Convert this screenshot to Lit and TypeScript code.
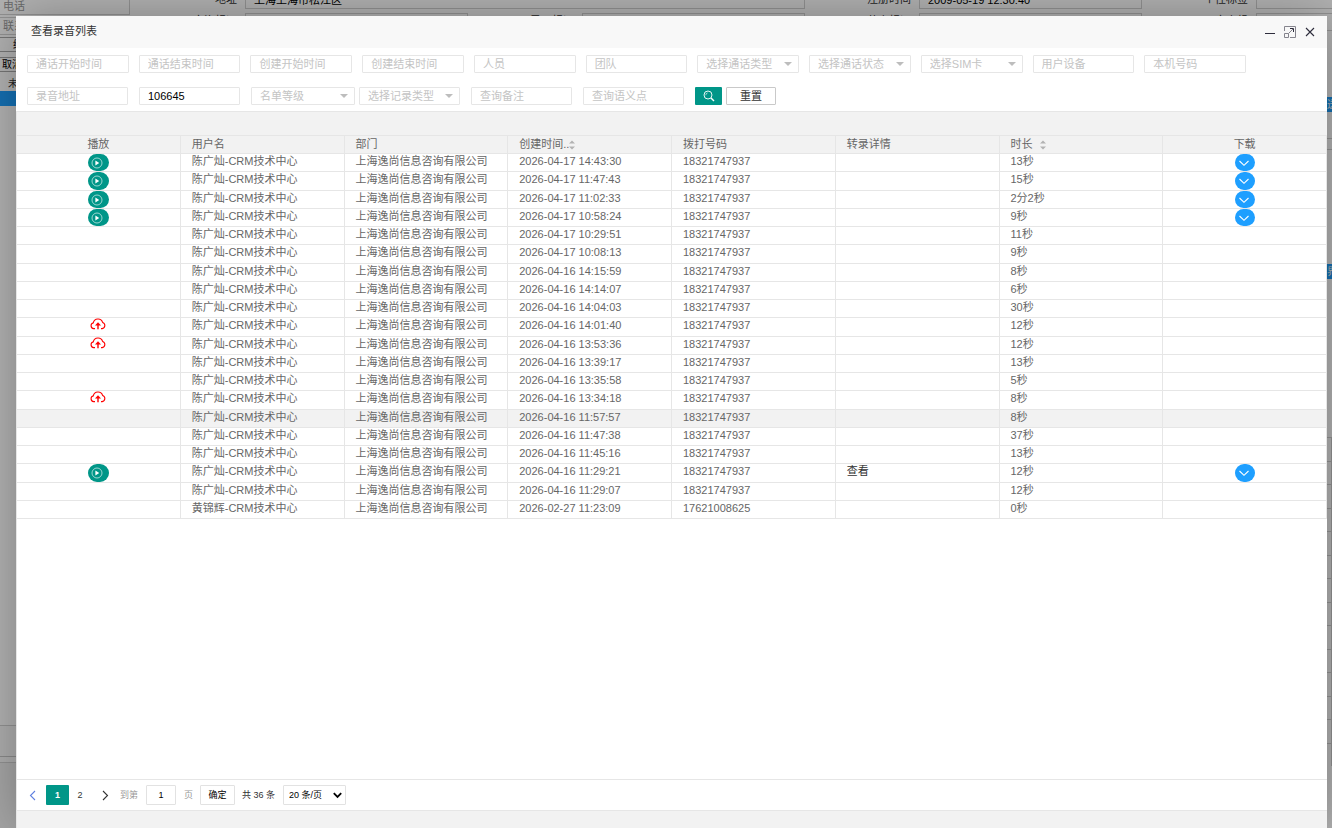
import { LitElement, html, css, svg, nothing } from "lit";
import { customElement } from "lit/decorators.js";

type Media = "play" | "upload" | "";
interface Row {
  user: string;
  time: string;
  phone: string;
  length: string;
  media: Media;
  detail: string;
}

const row = (time: string, length: string, media: Media = "", detail = ""): Row => ({
  user: "陈广灿-CRM技术中心",
  time,
  phone: "18321747937",
  length,
  media,
  detail,
});

const ROWS: Row[] = [
  row("2026-04-17 14:43:30", "13秒", "play"),
  row("2026-04-17 11:47:43", "15秒", "play"),
  row("2026-04-17 11:02:33", "2分2秒", "play"),
  row("2026-04-17 10:58:24", "9秒", "play"),
  row("2026-04-17 10:29:51", "11秒"),
  row("2026-04-17 10:08:13", "9秒"),
  row("2026-04-16 14:15:59", "8秒"),
  row("2026-04-16 14:14:07", "6秒"),
  row("2026-04-16 14:04:03", "30秒"),
  row("2026-04-16 14:01:40", "12秒", "upload"),
  row("2026-04-16 13:53:36", "12秒", "upload"),
  row("2026-04-16 13:39:17", "13秒"),
  row("2026-04-16 13:35:58", "5秒"),
  row("2026-04-16 13:34:18", "8秒", "upload"),
  row("2026-04-16 11:57:57", "8秒"),
  row("2026-04-16 11:47:38", "37秒"),
  row("2026-04-16 11:45:16", "13秒"),
  row("2026-04-16 11:29:21", "12秒", "play", "查看"),
  row("2026-04-16 11:29:07", "12秒"),
  { ...row("2026-02-27 11:23:09", "0秒"), user: "黄锦辉-CRM技术中心", phone: "17621008625" },
];
const HOVERED = 14;

const playIcon = html`<svg width="12" height="12" viewBox="0 0 12 12" aria-hidden="true">
  <circle cx="6" cy="6" r="5" fill="none" stroke="#fff" stroke-width="0.6" />
  <path d="M4.4 3.5 8.2 6 4.4 8.5z" fill="#fff" />
</svg>`;
const downIcon = html`<svg width="12" height="12" viewBox="0 0 12 12" aria-hidden="true">
  <path d="M1.5 4 6 8.3 10.5 4" fill="none" stroke="#fff" stroke-width="1.1" />
</svg>`;
const cloudIcon = html`<svg width="16" height="12" viewBox="0 0 16 12" aria-hidden="true">
  <path d="M5 10.6H3.6A2.9 2.9 0 0 1 3.3 4.9 4.8 4.8 0 0 1 12.6 4.4 3.2 3.2 0 0 1 12.2 10.6H11" fill="none" stroke="#f00" stroke-width="1.1" />
  <path d="M8 11.2V6" fill="none" stroke="#f00" stroke-width="1.4" />
  <path d="M5 7.4 8 4.2l3 3.2z" fill="#f00" />
</svg>`;
const sortIcon = html`<svg class="sort" width="6" height="10" viewBox="0 0 6 10" aria-hidden="true">
  <path d="M0 3.6 3 .6l3 3zM0 6.4l3 3 3-3z" fill="#b2b2b2" />
</svg>`;
const chevron = (d: string, color: string) => html`<svg width="7" height="11" viewBox="0 0 7 11" aria-hidden="true">
  ${svg`<path d=${d} fill="none" stroke=${color} stroke-width="1.1" />`}
</svg>`;

@customElement("page-backdrop")
export class PageBackdrop extends LitElement {
  static styles = css`
    :host {
      display: grid;
      grid-template-columns: 130px 1fr;
      height: 100%;
      overflow: hidden;
      background: #fff;
      color: #333;
      font: 11px/16px "Liberation Sans", "Noto Sans CJK SC", sans-serif;
    }
    .rail {
      display: flex;
      flex-direction: column;
      gap: 2px;
      margin-top: -3px;
    }
    .box {
      box-sizing: border-box;
      height: 18px;
      border: 1px solid #d2d2d2;
      border-left: 0;
      padding-left: 3px;
      color: #999;
      white-space: nowrap;
    }
    .key {
      height: 15px;
      box-sizing: border-box;
      margin-bottom: 3px;
      border: 1px solid #aaa;
      border-left: 0;
      padding-left: 2px;
      line-height: 13px;
      font-size: 10px;
      color: #000;
    }
    .short {
      padding-left: 13px;
    }
    .tab {
      height: 15px;
      padding-left: 8px;
      line-height: 13px;
      font-size: 10px;
    }
    .on {
      margin-top: -3px;
      background: #1e9fff;
    }
    .foot {
      margin-top: auto;
      height: 102px;
      border-top: 1px solid #d2d2d2;
      background: #eee;
    }
    .head {
      height: 30px;
      border-bottom: 1px solid #c6c6c6;
      background: #fafafa;
    }
    .sub {
      height: 5px;
      border-bottom: 1px solid #d2d2d2;
      background: #fafafa;
    }
    .main {
      min-width: 0;
      display: flex;
      flex-direction: column;
    }
    .form {
      display: grid;
      grid-template-columns: repeat(4, 114px 223px);
      row-gap: 4px;
      margin: -9px 0 0 1px;
    }
    .label {
      padding-right: 8px;
      text-align: right;
    }
    .value {
      box-sizing: border-box;
      height: 18px;
      border: 1px solid #d2d2d2;
      padding-left: 8px;
      color: #000;
    }
    .wide {
      grid-column: span 3;
    }
    .edge {
      align-self: flex-end;
      width: 5px;
      flex: 1;
      overflow: hidden;
    }
    .tag {
      height: 15px;
      background: #1e9fff;
      color: #fff;
      font-size: 10px;
      line-height: 15px;
    }
    .first {
      margin: 66px 0 26px;
    }
    .second {
      margin: 1px 0 158px;
    }
    .strip {
      height: 10px;
      border: solid #d2d2d2;
      border-width: 1px 0;
    }
    .gap {
      height: 113px;
    }
    .line {
      box-sizing: border-box;
      height: 24px;
      border: solid #d2d2d2;
      border-width: 1px 1px 0 0;
    }
    .line:nth-child(even) {
      height: 23px;
    }
  `;

  render() {
    return html`
      <div class="rail">
        <div class="box">电话</div>
        <div class="box">联系人</div>
        <div class="key short">编辑</div>
        <div class="key">取消</div>
        <div class="tab">未接</div>
        <div class="tab on"></div>
        <div class="foot">
          <div class="head"></div>
          <div class="sub"></div>
        </div>
      </div>
      <div class="main">
        <div class="form">
          <div class="label">地址</div>
          <div class="value wide">上海上海市松江区</div>
          <div class="label">注册时间</div>
          <div class="value">2009-05-19 12:30:40</div>
          <div class="label">个性标签</div>
          <div class="value"></div>
          <div class="label">客资标识</div>
          <div class="value"></div>
          <div class="label">导入标识</div>
          <div class="value"></div>
          <div class="label">蓝字标识</div>
          <div class="value"></div>
          <div class="label">客户组</div>
          <div class="value"></div>
        </div>
        <div class="edge">
          <div class="tag first">送</div>
          <div class="strip"></div>
          <div class="gap"></div>
          <div class="tag second">界</div>
          ${Array.from({ length: 14 }, () => html`<div class="line"></div>`)}
        </div>
      </div>
    `;
  }
}

@customElement("recording-table")
export class RecordingTable extends LitElement {
  static styles = css`
    :host {
      display: block;
    }
    table {
      width: 100%;
      table-layout: fixed;
      border-collapse: separate;
      border-spacing: 0;
      border-top: 1px solid #e6e6e6;
      color: #666;
      font: 11px/15px "Liberation Sans", "Noto Sans CJK SC", sans-serif;
    }
    th,
    td {
      box-sizing: border-box;
      height: 18px;
      padding: 0 11px;
      border: solid #e6e6e6;
      border-width: 0 1px 1px 0;
      font-weight: 400;
      text-align: left;
      vertical-align: top;
      white-space: nowrap;
      overflow: hidden;
    }
    thead th {
      background: #f2f2f2;
      line-height: 17px;
    }
    .center {
      text-align: center;
    }
    tbody tr:nth-child(4n + 2) td {
      height: 19px;
    }
    .hover td {
      background: #f2f2f2;
    }
    button,
    .link {
      font: inherit;
      border: 0;
      padding: 0;
      background: none;
      cursor: pointer;
    }
    .pill {
      display: flex;
      align-items: center;
      justify-content: center;
      width: 21px;
      height: 17px;
      margin: 0 auto;
      padding-right: 2px;
      border-radius: 9px;
      background: #009688;
    }
    .down {
      width: 20px;
      background: #1e9fff;
    }
    tbody tr:nth-child(4n + 2) .pill {
      height: 18px;
    }
    .cloud {
      display: block;
      width: 16px;
      height: 12px;
      margin: 0 auto;
      line-height: 0;
    }
    .link {
      color: #333;
      text-decoration: none;
    }
    .sortable {
      display: flex;
      align-items: center;
      color: inherit;
      height: 17px;
    }
    .spaced {
      gap: 7px;
    }
  `;

  private media(kind: Media) {
    if (kind === "play") return html`<button class="pill" aria-label="播放">${playIcon}</button>`;
    if (kind === "upload") return html`<button class="cloud" aria-label="上传">${cloudIcon}</button>`;
    return nothing;
  }

  render() {
    return html`
      <table>
        <thead>
          <tr>
            <th class="center">播放</th>
            <th>用户名</th>
            <th>部门</th>
            <th><button class="sortable">创建时间..${sortIcon}</button></th>
            <th>拨打号码</th>
            <th>转录详情</th>
            <th><button class="sortable spaced">时长${sortIcon}</button></th>
            <th class="center">下载</th>
          </tr>
        </thead>
        <tbody>
          ${ROWS.map(
            (r, i) => html`<tr class=${i === HOVERED ? "hover" : ""}>
              <td class="center">${this.media(r.media)}</td>
              <td>${r.user}</td>
              <td>上海逸尚信息咨询有限公司</td>
              <td>${r.time}</td>
              <td>${r.phone}</td>
              <td>${r.detail ? html`<a class="link" href="#detail">${r.detail}</a>` : nothing}</td>
              <td>${r.length}</td>
              <td class="center">
                ${r.media === "play" ? html`<button class="pill down" aria-label="下载">${downIcon}</button>` : nothing}
              </td>
            </tr>`
          )}
        </tbody>
      </table>
    `;
  }
}

@customElement("app-root")
export class AppRoot extends LitElement {
  static styles = css`
    :host {
      display: block;
      position: relative;
      height: 100vh;
      overflow: hidden;
      font: 11px/16px "Liberation Sans", "Noto Sans CJK SC", sans-serif;
      color: #333;
    }
    .shade {
      position: absolute;
      inset: 0;
      background: rgba(0, 0, 0, 0.3);
    }
    .dialog {
      position: absolute;
      inset: 16px 5px 0 16px;
      display: flex;
      flex-direction: column;
      background: #fff;
      box-shadow: 1px 1px 50px rgba(0, 0, 0, 0.3);
    }
    header {
      display: flex;
      align-items: center;
      justify-content: space-between;
      height: 32px;
      padding: 0 11px 0 15px;
      background: #f8f8f8;
    }
    h1 {
      margin: 0;
      font-size: 11px;
      font-weight: 400;
      line-height: 30px;
      height: 32px;
    }
    .tools {
      display: flex;
      align-items: center;
      gap: 8px;
    }
    button,
    input,
    select {
      box-sizing: border-box;
      margin: 0;
      font: inherit;
      border-radius: 1px;
    }
    .tool {
      display: flex;
      border: 0;
      padding: 0;
      background: none;
    }
    .filters {
      display: flex;
      flex-direction: column;
      gap: 14px;
      padding: 7px 81px 6px 11px;
      border-bottom: 1px solid #e6e6e6;
    }
    .line {
      display: grid;
      grid-template-columns: repeat(11, minmax(0, 1fr));
      gap: 10px;
    }
    .flow {
      display: flex;
      gap: 11px;
    }
    .flow .field {
      width: 101px;
    }
    .pair,
    .actions {
      display: flex;
      gap: 4px;
    }
    .field {
      display: grid;
      position: relative;
    }
    .flow .field.level {
      width: 104px;
    }
    .control {
      width: 100%;
      height: 18px;
      border: 1px solid #e6e6e6;
      padding: 0 8px;
      background: #fff;
      color: #000;
      line-height: 16px;
      outline: 0;
      appearance: none;
    }
    .control::placeholder {
      color: #c4c4c4;
      opacity: 1;
    }
    select.control {
      color: #c4c4c4;
      padding-right: 16px;
    }
    .caret {
      position: absolute;
      right: 7px;
      top: 7px;
      pointer-events: none;
    }
    .search {
      display: flex;
      align-items: center;
      justify-content: center;
      width: 27px;
      height: 18px;
      border: 0;
      padding: 0;
      background: #009688;
    }
    .reset {
      width: 50px;
      height: 18px;
      border: 1px solid #c9c9c9;
      padding: 0;
      background: #fff;
      color: #333;
      line-height: 16px;
    }
    .body {
      flex: 1;
      display: flex;
      flex-direction: column;
      border-left: 1px solid #e6e6e6;
    }
    .toolbar {
      height: 23px;
      background: #f2f2f2;
    }
    nav {
      display: flex;
      align-items: center;
      height: 30px;
      margin-top: auto;
      border: solid #e6e6e6;
      border-width: 1px 0;
      padding-left: 8px;
      font-size: 9px;
    }
    .bottom {
      height: 17px;
      background: #f2f2f2;
    }
    nav button,
    nav input,
    nav select {
      height: 20px;
      border: 1px solid #e2e2e2;
      padding: 0;
      background: #fff;
      color: #000;
    }
    nav .page {
      display: flex;
      align-items: center;
      justify-content: center;
      width: 22px;
      border: 0;
      color: #333;
    }
    nav .current {
      width: 23px;
      background: #009688;
      color: #fff;
      font-weight: 700;
    }
    nav .prev {
      width: 14px;
      margin-right: 7px;
    }
    nav .next {
      width: 14px;
      margin: 0 8px 0 7px;
    }
    .jump {
      display: flex;
      align-items: center;
      gap: 8px;
      margin-right: 7px;
      color: #999;
    }
    .jump input {
      width: 30px;
      text-align: center;
    }
    nav .ok {
      width: 35px;
    }
    .total {
      margin: 0 8px 0 7px;
    }
    .size {
      display: grid;
      position: relative;
    }
    nav .size select {
      width: 63px;
      padding-left: 5px;
      appearance: none;
    }
    .tick {
      position: absolute;
      right: 4px;
      top: 7px;
      pointer-events: none;
    }
  `;

  private input(name: string, value = "") {
    return html`<div class="field">
      <input class="control" type="text" aria-label=${name} placeholder=${name} .value=${value} />
    </div>`;
  }

  private select(name: string, extra = "") {
    return html`<div class="field ${extra}">
      <select class="control" aria-label=${name}><option>${name}</option></select>
      <svg class="caret" width="8" height="4" viewBox="0 0 8 4" aria-hidden="true">
        <path d="M0 0h8L4 4z" fill="#bdbdbd" />
      </svg>
    </div>`;
  }

  render() {
    return html`
      <page-backdrop aria-hidden="true"></page-backdrop>
      <div class="shade"></div>
      <section class="dialog" role="dialog" aria-label="查看录音列表">
        <header>
          <h1>查看录音列表</h1>
          <div class="tools">
            <button class="tool" aria-label="最小化">
              <svg width="12" height="12" viewBox="0 0 12 12"><path d="M1 7.5h10" stroke="#2e2d3c" stroke-width="1" /></svg>
            </button>
            <button class="tool" aria-label="最大化">
              <svg width="12" height="12" viewBox="0 0 12 12" fill="none" stroke="#85848d">
                <path d="M.5 5V.5h11v11H6M.5 7.5h4v4h-4zM4.5 7.5 9 3" />
                <path d="M6 2.5h3.5V6" stroke="#2e2d3c" />
              </svg>
            </button>
            <button class="tool" aria-label="关闭">
              <svg width="12" height="12" viewBox="0 0 12 12"><path d="m2 2 8 8m0-8-8 8" stroke="#2e2d3c" stroke-width="1.1" /></svg>
            </button>
          </div>
        </header>

        <form class="filters" @submit=${(e: Event) => e.preventDefault()}>
          <div class="line">
            ${["通话开始时间", "通话结束时间", "创建开始时间", "创建结束时间", "人员", "团队"].map((n) => this.input(n))}
            ${["选择通话类型", "选择通话状态", "选择SIM卡"].map((n) => this.select(n))}
            ${["用户设备", "本机号码"].map((n) => this.input(n))}
          </div>
          <div class="flow">
            ${this.input("录音地址")} ${this.input("客户编号", "106645")}
            <div class="pair">${this.select("名单等级", "level")} ${this.select("选择记录类型")}</div>
            ${this.input("查询备注")} ${this.input("查询语义点")}
            <div class="actions">
              <button class="search" aria-label="搜索">
                <svg width="12" height="12" viewBox="0 0 12 12" fill="none" stroke="#fff">
                  <circle cx="5" cy="5" r="4" stroke-width="0.9" />
                  <path d="M2.8 5.2A2.2 2.2 0 0 1 4.6 2.9" stroke-width="0.6" />
                  <path d="m8 8 3 3" stroke-width="1.4" />
                </svg>
              </button>
              <button class="reset" type="reset">重置</button>
            </div>
          </div>
        </form>

        <div class="body">
          <div class="toolbar"></div>
          <recording-table></recording-table>
          <nav aria-label="分页">
            <button class="page prev" aria-label="上一页">${chevron("M6 1 1.5 5.5 6 10", "#5f7fe0")}</button>
            <button class="page current">1</button>
            <button class="page">2</button>
            <button class="page next" aria-label="下一页">${chevron("M1 1l4.5 4.5L1 10", "#333")}</button>
            <label class="jump">到第<input type="text" .value=${"1"} />页</label>
            <button class="ok">确定</button>
            <span class="total">共 36 条</span>
            <div class="size">
              <select aria-label="每页条数"><option>20 条/页</option></select>
              <svg class="tick" width="9" height="7" viewBox="0 0 9 7" aria-hidden="true">
                <path d="M.8 1.2 4.5 5 8.2 1.2" fill="none" stroke="#000" stroke-width="1.8" />
              </svg>
            </div>
          </nav>
          <div class="bottom"></div>
        </div>
      </section>
    `;
  }
}
